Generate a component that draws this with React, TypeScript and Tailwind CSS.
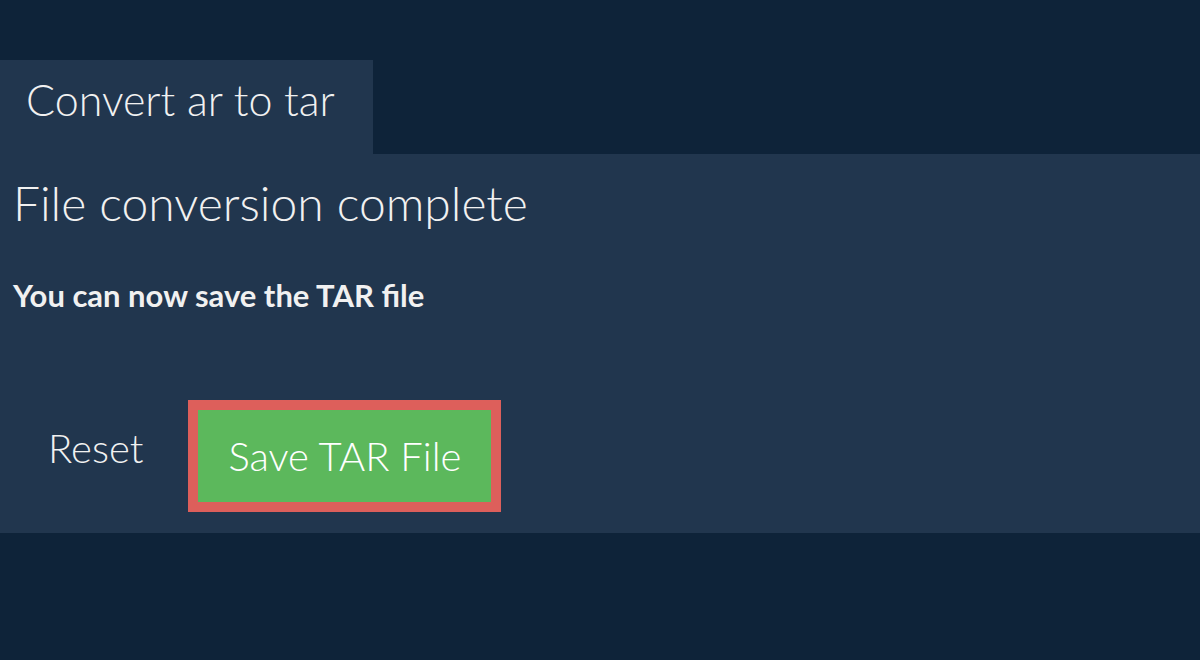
export default function App() {
  return (
    <div
      className="min-h-[660px] bg-[#0e2339] pt-[60px] text-[#f1f1f1]"
      style={{ fontFamily: 'Lato, "Noto Sans", sans-serif' }}
    >
      {/* Tab */}
      <div className="flex">
        <div className="h-[94px] w-[373px] bg-[#21364e] pl-[26px] pt-[14px]">
          <h1 className="text-[43px] font-light leading-[1.2]">Convert ar to tar</h1>
        </div>
      </div>

      {/* Panel */}
      <div className="h-[379px] bg-[#21364e] pl-[13px] pt-[20px]">
        <h2 className="text-[48px] font-light leading-[1.2]">File conversion complete</h2>
        <p className="mt-[45px] text-[31px] font-bold leading-[1.2]">You can now save the TAR file</p>

        <div className="mt-[86px] flex items-start">
          <button className="ml-[35px] mt-[24px] text-[40px] font-light leading-[1.2] text-[#f1f1f1]">
            Reset
          </button>
          <button className="ml-[45px] h-[112px] w-[313px] border-[10px] border-[#dd5f5b] bg-[#5cb85c] text-[40px] font-light leading-[1.2] text-white">
            Save TAR File
          </button>
        </div>
      </div>
    </div>
  );
}
